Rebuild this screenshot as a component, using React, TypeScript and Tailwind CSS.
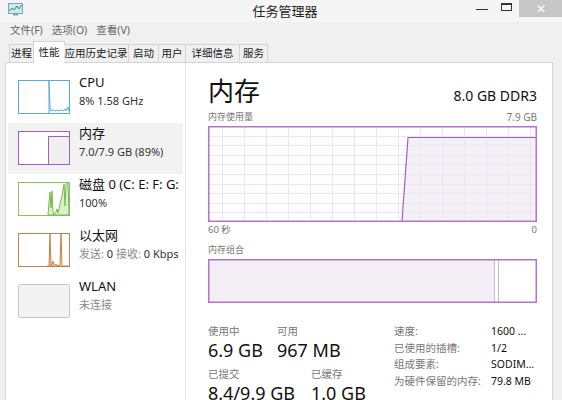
import React from "react";

const FONT = { fontFamily: '"Noto Sans", "Noto Sans CJK SC", sans-serif' };

function AppIcon() {
  return (
    <svg width="15" height="13" viewBox="0 0 15 13">
      <rect x="0.5" y="0.5" width="14" height="10" fill="#cfe8ef" stroke="#7aa7b8" />
      <polyline points="1.5,8 4,5 6,7 9,3 11,6 13.5,2" fill="none" stroke="#3d8a5a" strokeWidth="1" />
      <rect x="5" y="11" width="5" height="1.5" fill="#7aa7b8" />
    </svg>
  );
}

function CpuMini() {
  return (
    <svg width="52" height="34" viewBox="0 0 52 34">
      <rect x="0.5" y="0.5" width="51" height="33" fill="#fff" stroke="#5aaad2" />
      <polyline
        points="31,33 31,1 32,28 33,31 35,30 37,31 39,30 41,31 43,30 45,31 47,29 48,31 50,27 51,31"
        fill="none"
        stroke="#5aaad2"
        strokeWidth="1"
      />
    </svg>
  );
}

function MemMini() {
  return (
    <svg width="52" height="34" viewBox="0 0 52 34">
      <rect x="0.5" y="0.5" width="51" height="33" fill="#fff" stroke="#a45ec0" />
      <rect x="30.5" y="5.5" width="21" height="28" fill="#efefef" stroke="#a45ec0" />
    </svg>
  );
}

function DiskMini() {
  return (
    <svg width="52" height="34" viewBox="0 0 52 34">
      <rect x="0.5" y="0.5" width="51" height="33" fill="#fff" stroke="#8cc063" />
      <polygon
        points="30,33 31,20 32,10 33,26 34,9 35,30 36,33 38,30 39,27 40,31 42,22 44,14 45,8 46,2 47,24 48,3 49,1 50,1 51,33"
        fill="#dcefcc"
        stroke="#7ab850"
        strokeWidth="1"
      />
    </svg>
  );
}

function EthMini() {
  return (
    <svg width="52" height="34" viewBox="0 0 52 34">
      <rect x="0.5" y="0.5" width="51" height="33" fill="#fff" stroke="#c88048" />
      <polyline
        points="29,33 31,33 32,1 33,33 35,28 36,33 38,31 39,33 42,32 43,1 44,33 51,33"
        fill="#f3dcc8"
        stroke="#c88048"
        strokeWidth="1"
      />
    </svg>
  );
}

function WlanMini() {
  return (
    <svg width="52" height="34" viewBox="0 0 52 34">
      <rect x="0.5" y="0.5" width="51" height="33" rx="1" fill="#f3f3f3" stroke="#c6c6c6" />
    </svg>
  );
}

function UsageGraph() {
  const w = 329;
  const h = 96;
  const vx: number[] = [];
  for (let k = 0; k < 15; k++) vx.push(14 + 22 * k);
  const hy: number[] = [];
  for (let k = 1; k < 10; k++) hy.push(Math.round(k * 9.6));
  return (
    <svg width={w} height={h} viewBox={`0 0 ${w} ${h}`} className="block">
      <rect x="0" y="0" width={w} height={h} fill="#fff" />
      <polygon points={`194,${h} 200,11 ${w},11 ${w},${h}`} fill="#f4f1f6" />
      {vx.map((x) => (
        <line key={"v" + x} x1={x + 0.5} y1="0" x2={x + 0.5} y2={h} stroke="#efe5f2" strokeWidth="1" />
      ))}
      {hy.map((y) => (
        <line key={"h" + y} x1="0" y1={y + 0.5} x2={w} y2={y + 0.5} stroke="#efe5f2" strokeWidth="1" />
      ))}
      <polyline points={`194,${h - 1} 200,11.5 ${w - 1},11.5`} fill="none" stroke="#a45ec0" strokeWidth="1.2" />
      <rect x="0.75" y="0.75" width={w - 1.5} height={h - 1.5} fill="none" stroke="#b274ca" strokeWidth="1.5" />
    </svg>
  );
}

function CompositionBar() {
  const w = 329;
  const h = 44;
  return (
    <svg width={w} height={h} viewBox={`0 0 ${w} ${h}`} className="block">
      <rect x="0" y="0" width={w} height={h} fill="#fff" />
      <rect x="0" y="0" width="286" height={h} fill="#f3eff5" />
      <line x1="286.5" y1="0" x2="286.5" y2={h} stroke="#cdb9d6" />
      <line x1="290.5" y1="0" x2="290.5" y2={h} stroke="#cdb9d6" />
      <rect x="0.75" y="0.75" width={w - 1.5} height={h - 1.5} fill="none" stroke="#b274ca" strokeWidth="1.5" />
    </svg>
  );
}

type Item = {
  key: string;
  title: string;
  sub: React.ReactNode;
  graph: React.ReactNode;
  selected?: boolean;
};

const items: Item[] = [
  { key: "cpu", title: "CPU", sub: <span className="text-[#333]">8% 1.58 GHz</span>, graph: <CpuMini /> },
  {
    key: "mem",
    title: "内存",
    sub: <span className="text-[#333]">7.0/7.9 GB (89%)</span>,
    graph: <MemMini />,
    selected: true,
  },
  {
    key: "disk",
    title: "磁盘 0 (C: E: F: G:",
    sub: <span className="text-[#333]">100%</span>,
    graph: <DiskMini />,
  },
  {
    key: "eth",
    title: "以太网",
    sub: (
      <span>
        <span className="text-[#8a8a8a]">发送:</span> <span className="text-[#333]">0</span>{" "}
        <span className="text-[#8a8a8a]">接收:</span> <span className="text-[#333]">0 Kbps</span>
      </span>
    ),
    graph: <EthMini />,
  },
  { key: "wlan", title: "WLAN", sub: <span className="text-[#8a8a8a]">未连接</span>, graph: <WlanMini /> },
];

const tabs = [
  { label: "进程", w: "w-[25px]" },
  { label: "性能", w: "w-[32px]", active: true },
  { label: "应用历史记录", w: "w-[65px]" },
  { label: "启动", w: "w-[30px]" },
  { label: "用户", w: "w-[27px]" },
  { label: "详细信息", w: "w-[54px]" },
  { label: "服务", w: "w-[28px]" },
];

export default function App() {
  return (
    <div className="w-[562px] h-[400px] overflow-hidden bg-[#f0f0f0] text-[#1a1a1a] flex flex-col" style={FONT}>
      {/* Title bar */}
      <div className="h-[22px] flex items-start bg-[#f5f5f5] shrink-0">
        <div className="flex-1 pl-[8px] pt-[3px]">
          <AppIcon />
        </div>
        <div className="text-[13px] leading-[20px] text-[#222] pt-[1px]">任务管理器</div>
        <div className="flex-1 flex justify-end items-start">
          <div className="w-[14px] h-[16px] flex items-center justify-center mr-[10px]">
            <div className="w-[12px] h-[1.5px] bg-[#333] mt-[3px]" />
          </div>
          <div className="w-[14px] h-[16px] flex items-center justify-center mr-[6px]">
            <div className="w-[11px] h-[8px] border border-[#333] border-t-2 mt-[-2px]" />
          </div>
          <div className="w-[43px] h-[17px] bg-[#c7c7c7] flex items-center justify-center text-white text-[12px] leading-none">
            ✕
          </div>
        </div>
      </div>

      {/* Menu bar */}
      <div className="h-[18px] flex items-center gap-[9px] pl-[10px] text-[10.5px] text-[#666] shrink-0">
        <span>文件(F)</span>
        <span>选项(O)</span>
        <span>查看(V)</span>
      </div>

      {/* Tabs */}
      <div className="h-[22px] flex items-end pl-[9px] shrink-0 relative z-10">
        {tabs.map((t, i) =>
          t.active ? (
            <div
              key={t.label}
              className={`${t.w} h-[22px] bg-white border-t border-x border-[#d4d4d4] flex items-center justify-center text-[10.5px] text-[#222] -mb-px -mx-px`}
            >
              {t.label}
            </div>
          ) : (
            <div
              key={t.label}
              className={`${t.w} h-[18px] bg-[#f0f0f0] border-t border-r ${i === 0 ? "border-l" : ""} border-[#d4d4d4] flex items-center justify-center text-[10.5px] text-[#222]`}
            >
              {t.label}
            </div>
          )
        )}
      </div>

      {/* Content */}
      <div className="flex-1 flex ml-[5px] mr-[9px] border-t border-x border-[#d4d4d4] bg-white min-h-0">
        {/* Left list */}
        <div className="w-[180px] border-r border-[#e6e6e6] pt-[9px] px-[2px] shrink-0">
          {items.map((it) => (
            <div
              key={it.key}
              className={`h-[51px] flex items-start pl-[10px] ${it.selected ? "bg-[#f2f2f2]" : ""}`}
            >
              <div className="mt-[8px] shrink-0">{it.graph}</div>
              <div className="ml-[9px] mt-[1px] min-w-0 overflow-hidden whitespace-nowrap">
                <div className="text-[13px] leading-[18px] text-[#111]">{it.title}</div>
                <div className="text-[11px] leading-[14px] mt-[3px]">{it.sub}</div>
              </div>
            </div>
          ))}
        </div>

        {/* Right detail */}
        <div className="flex-1 pl-[22px] pr-[15px] min-w-0">
          <div className="mt-[15px] flex items-baseline justify-between">
            <div className="text-[26px] leading-[26px] text-[#111]">内存</div>
            <div className="text-[14px] leading-[16px] text-[#111]">8.0 GB DDR3</div>
          </div>
          <div className="mt-[7px] flex justify-between text-[9px] leading-[12px] text-[#777]">
            <span>内存使用量</span>
            <span className="text-[10px]">7.9 GB</span>
          </div>
          <div className="mt-[3px]">
            <UsageGraph />
          </div>
          <div className="mt-[2px] flex justify-between text-[9.5px] leading-[12px] text-[#777]">
            <span>60 秒</span>
            <span>0</span>
          </div>
          <div className="mt-[8px] text-[9px] leading-[12px] text-[#777]">内存组合</div>
          <div className="mt-[3px]">
            <CompositionBar />
          </div>

          <div className="mt-[21px] flex">
            <div className="w-[186px] shrink-0">
              <div className="flex">
                <div className="w-[69px]">
                  <div className="text-[10.5px] leading-[14px] text-[#777]">使用中</div>
                  <div className="text-[18px] leading-[24px] text-[#111]">6.9 GB</div>
                </div>
                <div>
                  <div className="text-[10.5px] leading-[14px] text-[#777]">可用</div>
                  <div className="text-[18px] leading-[24px] text-[#111]">967 MB</div>
                </div>
              </div>
              <div className="flex mt-[5px]">
                <div className="w-[103px]">
                  <div className="text-[10.5px] leading-[14px] text-[#777]">已提交</div>
                  <div className="text-[18px] leading-[24px] text-[#111]">8.4/9.9 GB</div>
                </div>
                <div>
                  <div className="text-[10.5px] leading-[14px] text-[#777]">已缓存</div>
                  <div className="text-[18px] leading-[24px] text-[#111]">1.0 GB</div>
                </div>
              </div>
            </div>
            <div className="flex text-[10.5px] leading-[16.5px] -mt-[1px]">
              <div className="w-[97px] text-[#777]">
                <div>速度:</div>
                <div>已使用的插槽:</div>
                <div>组成要素:</div>
                <div>为硬件保留的内存:</div>
              </div>
              <div className="text-[#111]">
                <div>1600 ...</div>
                <div>1/2</div>
                <div>SODIM...</div>
                <div>79.8 MB</div>
              </div>
            </div>
          </div>
        </div>
      </div>
    </div>
  );
}
